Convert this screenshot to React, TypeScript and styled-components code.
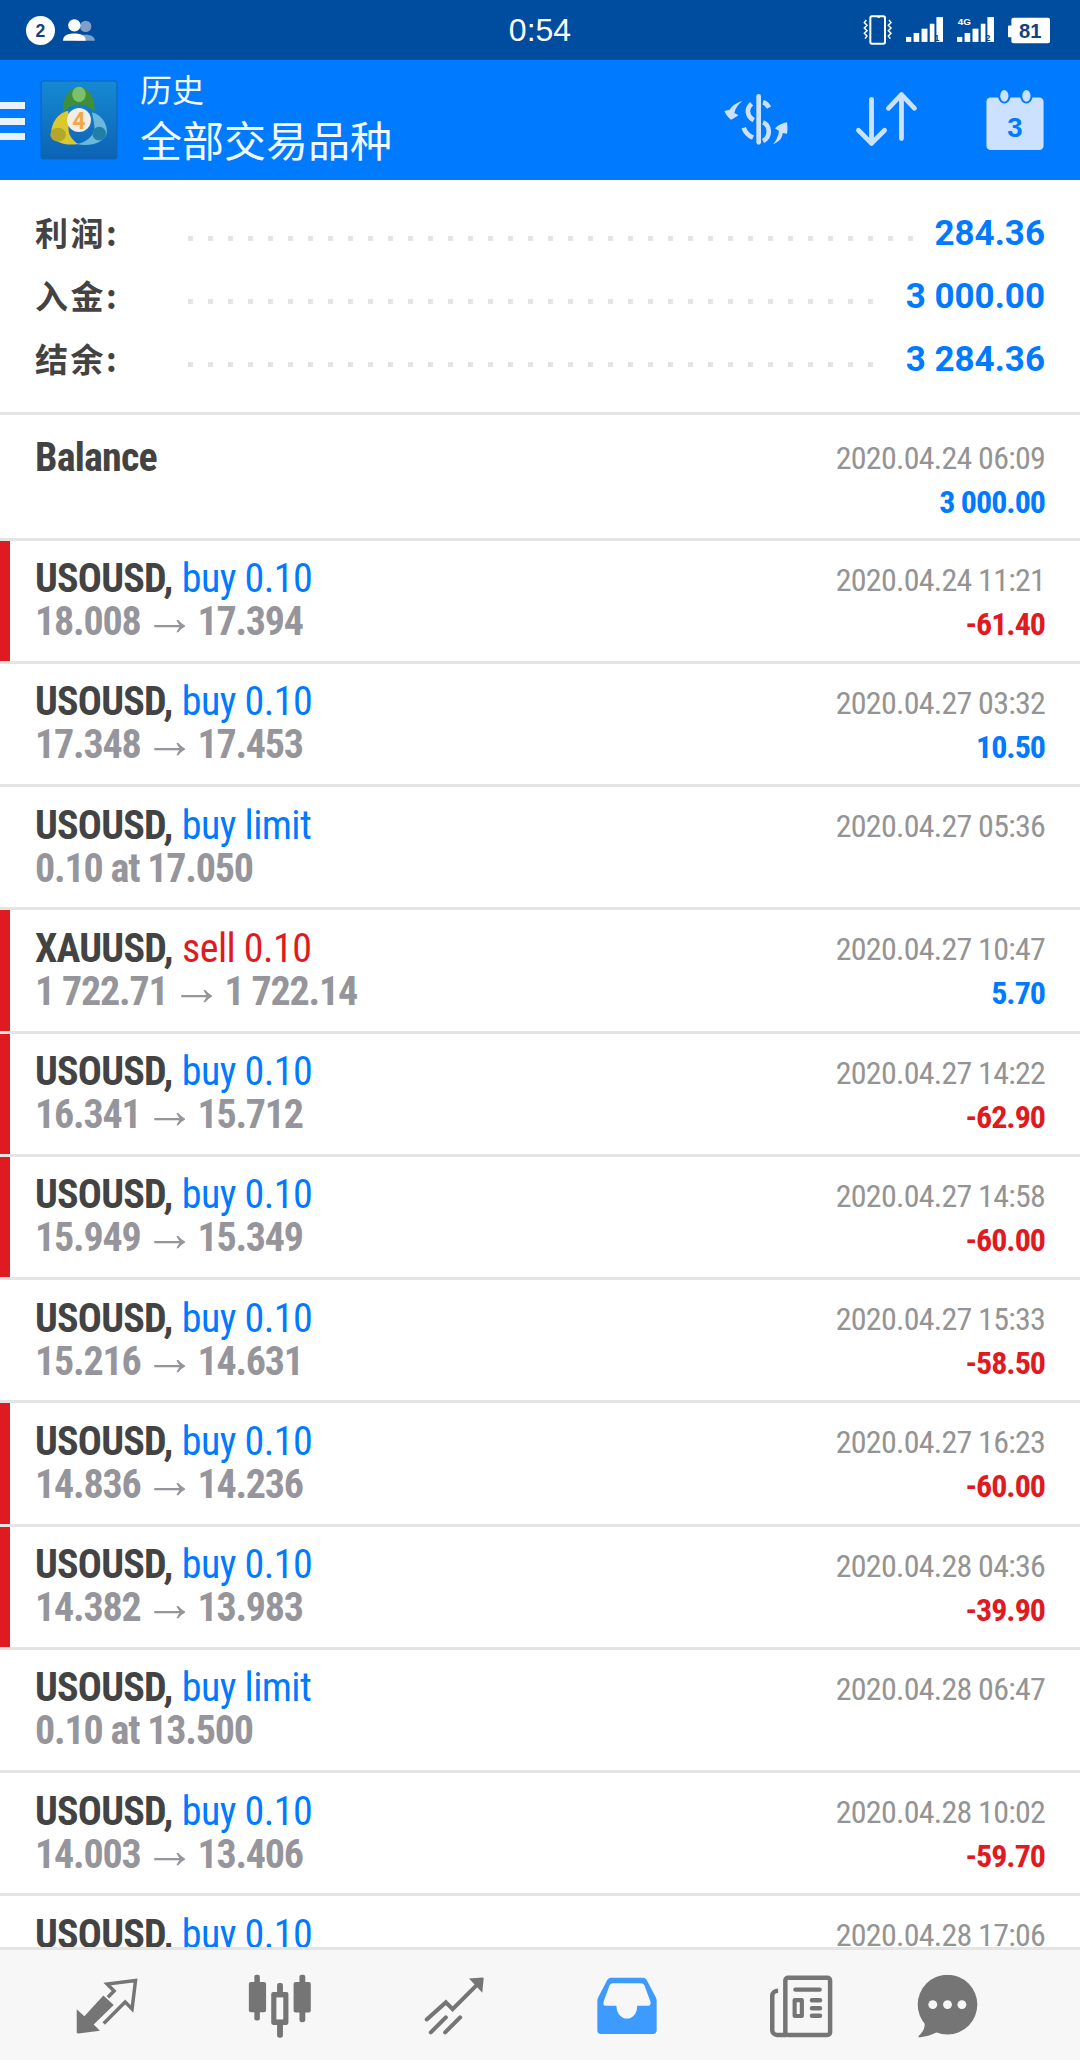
import React from "react";
import styled, { createGlobalStyle } from "styled-components";

const Global = createGlobalStyle`
  html, body { margin: 0; padding: 0; background: #fff; }
  body { font-family: Roboto, "Noto Sans CJK SC", sans-serif; }
`;

const Page = styled.div`
  width: 1080px;
  height: 2060px;
  display: flex;
  flex-direction: column;
  overflow: hidden;
  background: #fff;
`;

const StatusBar = styled.div`
  height: 60px;
  flex: none;
  background: #004c9f;
  display: grid;
  grid-template-columns: 1fr auto 1fr;
  align-items: center;
  color: #fff;
`;
const StatusLeft = styled.div`
  display: flex;
  align-items: center;
  gap: 8px;
  padding-left: 26px;
`;
const StatusRight = styled.div`
  display: flex;
  align-items: center;
  justify-content: flex-end;
  gap: 13px;
  padding-right: 30px;
`;
const Clock = styled.div`
  font: 400 32px "Liberation Sans", sans-serif;
`;

const Toolbar = styled.div`
  height: 120px;
  flex: none;
  background: #007aff;
  display: flex;
  align-items: center;
`;
const MenuBars = styled.div`
  width: 25px;
  height: 38px;
  margin-top: 2px;
  display: flex;
  flex-direction: column;
  justify-content: space-between;
`;
const MenuBar = styled.div`
  height: 7px;
  background: #e8f2ff;
`;
const Heading = styled.div`
  margin-left: 22px;
  color: #f2f8ff;
  font-family: "Noto Sans CJK SC", sans-serif;
  display: flex;
  flex-direction: column;
`;
const HeadingSmall = styled.div`
  font-size: 32px;
  line-height: 40px;
  margin-top: -4px;
`;
const HeadingLarge = styled.div`
  font-size: 42px;
  line-height: 58px;
  margin-top: 2px;
`;
const ToolIcons = styled.div`
  margin-left: auto;
  display: flex;
  align-items: center;
  padding-right: 35px;
`;

const Summary = styled.div`
  height: 235px;
  flex: none;
  box-sizing: border-box;
  border-bottom: 3px solid #e4e4e4;
  padding: 22px 35px 0;
`;
const SummaryRow = styled.div`
  height: 63px;
  display: flex;
  align-items: center;
`;
const SummaryLabel = styled.div`
  width: 153px;
  flex: none;
  margin-top: -3px;
  font: 700 33px "Noto Sans CJK SC", sans-serif;
  letter-spacing: 2.5px;
  color: #434343;
`;
const Dots = styled.div`
  flex: 1;
  height: 5px;
  margin: 10px 20px 0 0;
  background-image: linear-gradient(90deg, #e4e4e4 5px, transparent 5px);
  background-size: 20px 5px;
  background-repeat: repeat-x;
`;
const SummaryValue = styled.div`
  font: 700 35px Roboto, sans-serif;
  color: #007aff;
`;

const List = styled.div`
  flex: 1;
  min-height: 0;
  overflow: hidden;
`;
const Row = styled.div<{ $marked?: boolean; $tall?: boolean }>`
  height: ${(p) => (p.$tall ? 122.5 : 120.25)}px;
  border-bottom: 3px solid #e4e4e4;
  position: relative;
  display: flex;
  justify-content: space-between;
  padding: 0 35px;
  &::before {
    content: "";
    display: ${(p) => (p.$marked ? "block" : "none")};
    position: absolute;
    left: 0;
    top: 0;
    bottom: 0;
    width: 10px;
    background: #e01a21;
  }
`;
const Side = styled.div<{ $top: number }>`
  padding-top: ${(p) => p.$top}px;
  display: flex;
  flex-direction: column;
`;
const RightSide = styled(Side)`
  align-items: flex-end;
`;
const Condensed = styled.div`
  font-family: Roboto, sans-serif;
  font-stretch: 75%;
  white-space: nowrap;
`;
const Title = styled(Condensed)`
  font-size: 40px;
  line-height: 43px;
  font-weight: 700;
  letter-spacing: -0.8px;
  color: #434343;
`;
const Side2 = styled.span<{ $sell?: boolean }>`
  font-weight: 400;
  letter-spacing: -0.55px;
  margin-left: 1px;
  color: ${(p) => (p.$sell ? "#e01a21" : "#007aff")};
`;
const Prices = styled(Condensed)`
  font-size: 40px;
  line-height: 44px;
  font-weight: 700;
  letter-spacing: -1.2px;
  color: #95959b;
`;
const Arrow = styled.span`
  font-family: "Liberation Sans", sans-serif;
  font-size: 52px;
  line-height: 0;
  font-weight: 400;
  margin: 0 -5px;
`;
const Time = styled(Condensed)`
  font-size: 32px;
  line-height: 44px;
  letter-spacing: -0.75px;
  color: #949494;
`;
const Amount = styled(Condensed)<{ $neg?: boolean }>`
  font-size: 32px;
  line-height: 44px;
  font-weight: 700;
  letter-spacing: -1px;
  color: ${(p) => (p.$neg ? "#e01a21" : "#007aff")};
`;

const TabBar = styled.div`
  height: 113px;
  flex: none;
  box-sizing: border-box;
  background: #f7f7f7;
  border-top: 3px solid #e4e4e4;
  padding: 2px 0 0 20px;
  display: grid;
  grid-template-columns: repeat(5, 173.5px) 120px;
  align-items: center;
  justify-items: center;
`;

type T = { s: string; side: string; sell?: boolean; p: React.ReactNode; t: string; a?: string; neg?: boolean; m?: boolean };
const pr = (a: string, b: string) => (
  <>
    {a} <Arrow>→</Arrow> {b}
  </>
);
const rows: T[] = [
  { s: "USOUSD", side: "buy 0.10", p: pr("18.008", "17.394"), t: "2020.04.24 11:21", a: "-61.40", neg: true, m: true },
  { s: "USOUSD", side: "buy 0.10", p: pr("17.348", "17.453"), t: "2020.04.27 03:32", a: "10.50" },
  { s: "USOUSD", side: "buy limit", p: "0.10 at 17.050", t: "2020.04.27 05:36" },
  { s: "XAUUSD", side: "sell 0.10", sell: true, p: pr("1 722.71", "1 722.14"), t: "2020.04.27 10:47", a: "5.70", m: true },
  { s: "USOUSD", side: "buy 0.10", p: pr("16.341", "15.712"), t: "2020.04.27 14:22", a: "-62.90", neg: true, m: true },
  { s: "USOUSD", side: "buy 0.10", p: pr("15.949", "15.349"), t: "2020.04.27 14:58", a: "-60.00", neg: true, m: true },
  { s: "USOUSD", side: "buy 0.10", p: pr("15.216", "14.631"), t: "2020.04.27 15:33", a: "-58.50", neg: true },
  { s: "USOUSD", side: "buy 0.10", p: pr("14.836", "14.236"), t: "2020.04.27 16:23", a: "-60.00", neg: true, m: true },
  { s: "USOUSD", side: "buy 0.10", p: pr("14.382", "13.983"), t: "2020.04.28 04:36", a: "-39.90", neg: true, m: true },
  { s: "USOUSD", side: "buy limit", p: "0.10 at 13.500", t: "2020.04.28 06:47" },
  { s: "USOUSD", side: "buy 0.10", p: pr("14.003", "13.406"), t: "2020.04.28 10:02", a: "-59.70", neg: true },
  { s: "USOUSD", side: "buy 0.10", p: "", t: "2020.04.28 17:06" },
];

const G = "#757575";
const L = "#cbe1ff";
const SB = "#12437f";

const Logo = () => (
  <svg width="78" height="80" viewBox="13 18 228 234" style={{ marginLeft: 15 }}>
    <defs>
      <linearGradient id="lg" x1="0" y1="0" x2="0" y2="1">
        <stop offset="0" stopColor="#1689d2" />
        <stop offset="1" stopColor="#0c62b4" />
      </linearGradient>
    </defs>
    <rect x="16" y="21" width="222" height="228" rx="8" fill="url(#lg)" stroke="#0d64b8" strokeWidth="3" />
    <path d="M95 108C70 112 45 140 46 175c4 25 44 37 79 30-25-15-35-40-25-65z" fill="#d9c82e" />
    <ellipse cx="66" cy="178" rx="23" ry="20" fill="#b3a62c" />
    <path d="M165 112c30 8 47 38 43 63-8 25-48 40-88 30 30-5 55-25 52-55z" fill="#6cb8dc" />
    <ellipse cx="186" cy="175" rx="20" ry="20" fill="#1f7fa6" />
    <path d="M82 112C76 72 100 40 127 38c28 2 51 34 45 74-12-13-22-20-45-22-22 2-33 9-45 22z" fill="#3f8f3a" />
    <ellipse cx="127" cy="60" rx="20" ry="22" fill="#7cc06c" />
    <circle cx="127" cy="135" r="35" fill="#f3ede4" />
    <text x="127" y="160" textAnchor="middle" fontFamily="Roboto, sans-serif" fontWeight="700" fontSize="68" fill="#f0a848">4</text>
  </svg>
);

const Badge = () => (
  <svg width="29" height="29" viewBox="0 0 28 28">
    <circle cx="14" cy="14" r="14" fill="#fff" />
    <text x="14" y="20" textAnchor="middle" fontFamily="Liberation Sans, sans-serif" fontWeight="700" fontSize="17" fill={SB}>2</text>
  </svg>
);
const People = () => (
  <svg width="33" height="23" viewBox="0 0 32 22">
    <g fill="#7f9fcb">
      <circle cx="22" cy="7" r="5.5" />
      <path d="M13 21c0-4 4-6 9-6s9 2 9 6z" />
    </g>
    <g fill="#fff">
      <circle cx="11" cy="6" r="6" />
      <path d="M0 21c0-5 4-7 11-7s11 2 11 7z" />
    </g>
  </svg>
);
const Phone = () => (
  <svg width="30" height="30" viewBox="38 23 90 90" fill="none" stroke="#fff">
    <rect x="60" y="27" width="44" height="82" rx="5" strokeWidth="6" />
    <path d="M82 30h6" strokeWidth="4" />
    <path d="M48 38l-6 8 8 8-8 8 8 8-8 8 8 8-6 8M116 38l6 8-8 8 8 8-8 8 8 8-8 8 6 8" strokeWidth="4.5" />
  </svg>
);
const Signal = ({ tag, n }: { tag?: string; n: string }) => (
  <svg width="38" height="26" viewBox="0 25 115 78">
    <g fill="#fff">
      <rect x="0" y="85" width="16" height="15" />
      <rect x="23" y="73" width="17" height="27" />
      <rect x="47" y="60" width="18" height="40" />
      <rect x="72" y="45" width="14" height="55" />
      <rect x="92" y="25" width="20" height="75" />
    </g>
    <text x="93" y="98" textAnchor="middle" fontSize="28" fontWeight="700" fontFamily="Liberation Sans, sans-serif" fill={SB}>{n}</text>
    {tag && <text x="2" y="50" fontSize="30" fontWeight="700" fontFamily="Liberation Sans, sans-serif" fill="#fff">{tag}</text>}
  </svg>
);
const Battery = () => (
  <svg width="42" height="27" viewBox="475 25 125 80">
    <rect x="475" y="50" width="12" height="35" rx="2" fill="#fff" />
    <rect x="485" y="27" width="115" height="76" rx="6" fill="#fff" />
    <text x="541" y="86" textAnchor="middle" fontSize="60" fontWeight="700" fontFamily="Liberation Sans, sans-serif" fill={SB}>81</text>
  </svg>
);

const DollarIcon = () => (
  <svg width="66" height="54" viewBox="34 26 198 162" style={{ marginRight: 66 }}>
    <g fill="none" stroke={L} strokeWidth="14">
      <path d="M141 36v138" strokeWidth="14" strokeLinecap="round" />
      <path d="M120 58c-16 14-16 36 6 50" />
      <path d="M154 54c8 2 14 8 18 16" />
      <path d="M154 114c22 8 24 44 0 56" />
      <path d="M96 130c4 12 14 24 28 30" />
    </g>
    <path fill={L} d="M92 50C72 56 60 66 54 76l-16 4c4 10 12 20 20 26 8-4 16-8 22-14l-12-6c4-16 12-26 24-36z" />
    <path fill={L} d="M184 180c20-8 28-20 29-34l13 2c2-10 2-20 0-34-12 2-26 8-36 18l12 8c-2 15-8 30-18 40z" />
  </svg>
);
const SortIcon = () => (
  <svg width="64" height="58" viewBox="910 278 186 168" style={{ marginRight: 66 }}>
    <g fill="none" stroke={L} strokeWidth="14" strokeLinecap="round" strokeLinejoin="round">
      <path d="M958 302v128M920 392l38 38 38-38" />
      <path d="M1045 288v128M1007 328l38-40 38 40" />
    </g>
  </svg>
);
const CalendarIcon = () => (
  <svg width="60" height="62" viewBox="1292 268 174 180">
    <rect x="1296" y="293" width="166" height="152" rx="12" fill={L} />
    <ellipse cx="1348" cy="288" rx="18" ry="22" fill="#007aff" />
    <ellipse cx="1412" cy="288" rx="18" ry="22" fill="#007aff" />
    <ellipse cx="1348" cy="288" rx="12" ry="17" fill={L} />
    <ellipse cx="1412" cy="288" rx="12" ry="17" fill={L} />
    <text x="1379" y="408" textAnchor="middle" fontFamily="Liberation Sans, sans-serif" fontWeight="700" fontSize="80" fill="#007aff">3</text>
  </svg>
);

const TradeIcon = () => (
  <svg width="64" height="59" viewBox="220 242 185 170">
    <path fill={G} d="M225 335l22 20 55-60 30 28-58 56 18 18-62 8c-3 0-6-2-5-6z" />
    <path fill="none" stroke={G} strokeWidth="10" d="M303 376l62-62 20 20 10-82-82 10 20 20-18 18" />
  </svg>
);
const CandleIcon = () => (
  <svg width="64" height="64" viewBox="720 230 185 186">
    <g fill={G}>
      <rect x="738" y="232" width="16" height="133" rx="6" />
      <rect x="722" y="253" width="50" height="88" rx="6" />
      <rect x="804" y="256" width="17" height="159" rx="6" />
      <rect x="787" y="282" width="50" height="96" rx="6" />
      <rect x="869" y="232" width="17" height="138" rx="6" />
      <rect x="852" y="253" width="50" height="89" rx="6" />
    </g>
    <rect x="802" y="298" width="20" height="64" fill="#f7f7f7" />
  </svg>
);
const ChartIcon = () => (
  <svg width="60" height="59" viewBox="1226 236 176 172">
    <g fill="none" stroke={G} strokeWidth="12" strokeLinecap="round" strokeLinejoin="miter">
      <path d="M1234 360l56-50 20 20 78-78" />
      <path d="M1246 398l44-44M1288 398l44-44" />
    </g>
    <path fill={G} d="M1358 240l40-3c2 0 3 1 3 3l-4 42z" />
  </svg>
);
const InboxIcon = () => (
  <svg width="60" height="58" viewBox="165 237 176 168">
    <path fill="#3d9bff" d="M205 238h95c5 0 9 3 11 7l27 52c1 3 2 5 2 8v88c0 6-5 10-10 10H176c-6 0-10-4-10-10v-88c0-3 1-5 2-8l27-52c2-4 6-7 10-7z" />
    <path fill="#f7f7f7" d="M212 254h82c5 0 8 2 10 6l17 46c3 8 1 14-7 14h-31c0 22-13 38-30 38s-31-16-31-38h-30c-8 0-10-6-7-14l17-46c2-4 5-6 10-6z" />
  </svg>
);
const NewsIcon = () => (
  <svg width="64" height="63" viewBox="667 230 185 183">
    <g fill="none" stroke={G} strokeWidth="13" strokeLinejoin="round">
      <rect x="714" y="238" width="130" height="166" rx="8" />
      <path d="M693 276c-10 0-17 6-17 14v100c0 8 6 14 14 14h28" />
      <rect x="741" y="303" width="21" height="46" strokeWidth="12" />
    </g>
    <g fill={G}>
      <rect x="737" y="266" width="83" height="13" rx="6" />
      <rect x="785" y="297" width="36" height="13" rx="6" />
      <rect x="785" y="320" width="36" height="13" rx="6" />
      <rect x="785" y="342" width="36" height="13" rx="6" />
    </g>
  </svg>
);
const ChatIcon = () => (
  <svg width="61" height="63" viewBox="1096 230 178 183">
    <circle cx="1185" cy="316" r="87" fill={G} />
    <path fill={G} d="M1118 360c2 20 0 32-16 46-4 4-2 6 4 5 22-2 42-8 60-24z" />
    <g fill="#f7f7f7">
      <circle cx="1142" cy="316" r="13" />
      <circle cx="1185" cy="316" r="13" />
      <circle cx="1227" cy="316" r="13" />
    </g>
  </svg>
);

export default function App() {
  return (
    <Page>
      <Global />
      <StatusBar>
        <StatusLeft>
          <Badge />
          <People />
        </StatusLeft>
        <Clock>0:54</Clock>
        <StatusRight>
          <Phone />
          <Signal n="1" />
          <Signal n="2" tag="4G" />
          <Battery />
        </StatusRight>
      </StatusBar>
      <Toolbar>
        <MenuBars>
          <MenuBar />
          <MenuBar />
          <MenuBar />
        </MenuBars>
        <Logo />
        <Heading>
          <HeadingSmall>历史</HeadingSmall>
          <HeadingLarge>全部交易品种</HeadingLarge>
        </Heading>
        <ToolIcons>
          <DollarIcon />
          <SortIcon />
          <CalendarIcon />
        </ToolIcons>
      </Toolbar>
      <Summary>
        <SummaryRow>
          <SummaryLabel>利润:</SummaryLabel>
          <Dots />
          <SummaryValue>284.36</SummaryValue>
        </SummaryRow>
        <SummaryRow>
          <SummaryLabel>入金:</SummaryLabel>
          <Dots />
          <SummaryValue>3 000.00</SummaryValue>
        </SummaryRow>
        <SummaryRow>
          <SummaryLabel>结余:</SummaryLabel>
          <Dots />
          <SummaryValue>3 284.36</SummaryValue>
        </SummaryRow>
      </Summary>
      <List>
        <Row $tall>
          <Side $top={21}>
            <Title>Balance</Title>
          </Side>
          <RightSide $top={21}>
            <Time>2020.04.24 06:09</Time>
            <Amount>3 000.00</Amount>
          </RightSide>
        </Row>
        {rows.map((r, i) => (
          <Row key={i} $marked={r.m}>
            <Side $top={16.5}>
              <Title>
                {r.s}, <Side2 $sell={r.sell}>{r.side}</Side2>
              </Title>
              <Prices>{r.p}</Prices>
            </Side>
            <RightSide $top={17}>
              <Time>{r.t}</Time>
              {r.a && <Amount $neg={r.neg}>{r.a}</Amount>}
            </RightSide>
          </Row>
        ))}
      </List>
      <TabBar>
        <TradeIcon />
        <CandleIcon />
        <ChartIcon />
        <InboxIcon />
        <NewsIcon />
        <ChatIcon />
      </TabBar>
    </Page>
  );
}
